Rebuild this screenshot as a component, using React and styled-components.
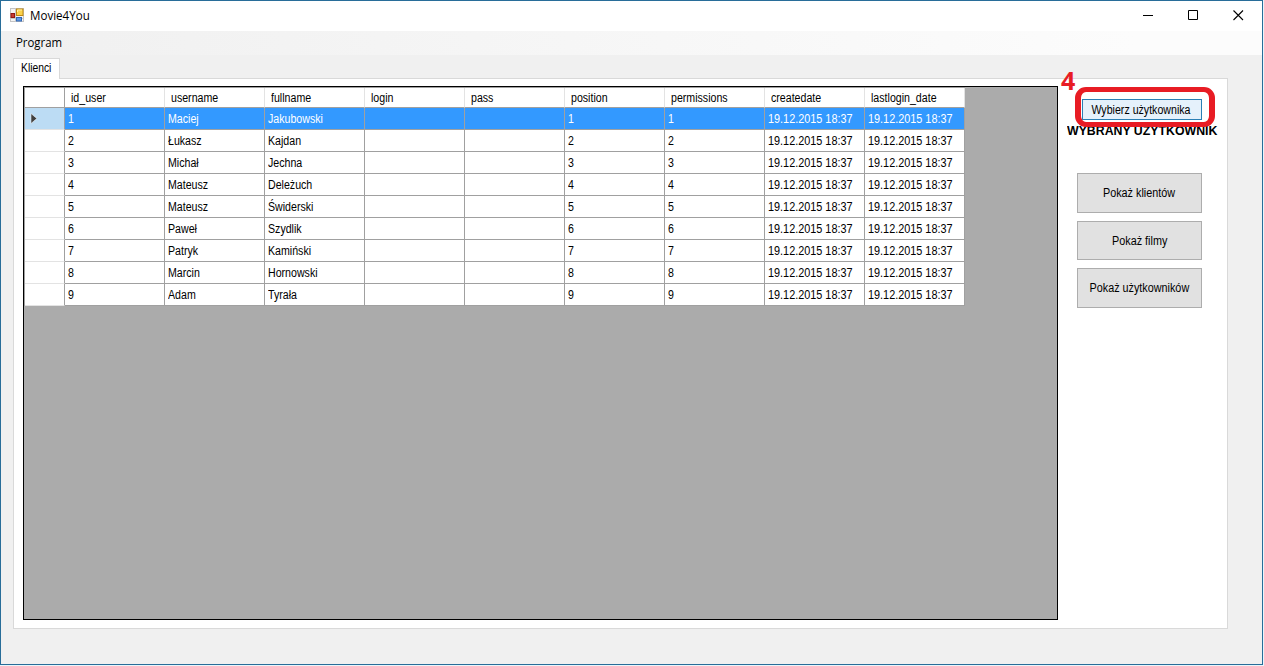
import React from "react";
import styled, { createGlobalStyle } from "styled-components";

const Global = createGlobalStyle`
  * { box-sizing: border-box; }
  html, body { margin: 0; padding: 0; background: #e9f5fb; overflow: hidden; }
  body { font-family: "Liberation Sans", Arial, sans-serif; font-size: 12px; color: #000; }
`;

const Window = styled.div`
  display: flex;
  flex-direction: column;
  width: 1263px;
  height: 665px;
  border: 1px solid #286d99;
  background: #f0f0f0;
`;

const TitleBar = styled.header`
  display: flex;
  align-items: center;
  flex: none;
  height: 30px;
  padding: 0 1px 2px 9px;
  background: #fff;
`;

const Label = styled.span`
  display: inline-block;
  white-space: pre;
  transform-origin: ${(p) => p.$origin || "left"} center;
  transform: scaleX(${(p) => p.$scale || 0.9});
`;

const SystemText = styled(Label)`
  font-family: "Open Sans", "Noto Sans", sans-serif;
  font-size: 12px;
  line-height: 16px;
`;

const Title = styled(SystemText)`
  flex: 1;
  margin: 2px 0 0 6px;
`;

const WindowButtons = styled.div`
  display: flex;
  flex: none;
`;

const WindowButton = styled.div`
  display: flex;
  align-items: center;
  justify-content: center;
  width: 45px;
  height: 28px;
`;

const MenuBar = styled.nav`
  flex: none;
  height: 24px;
  padding: 4px 15px;
  background: linear-gradient(90deg, #f0f0f0, #fcfcfc 90%);
`;

const TabControl = styled.main`
  display: flex;
  flex-direction: column;
  flex: 1;
  padding: 3px 34px 35px 12px;
`;

const Tab = styled.div`
  z-index: 1;
  width: 47px;
  height: 21px;
  margin-bottom: -1px;
  padding: 2px 0 0 7px;
  line-height: 14px;
  border: 1px solid #d9d9d9;
  border-bottom: 0;
  background: #fff;
`;

const TabPage = styled.section`
  display: flex;
  flex: 1;
  padding: 7px 9px 8px;
  border: 1px solid #d9d9d9;
  background: #fff;
`;

const GridBox = styled.div`
  flex: none;
  width: 1035px;
  border: 1px solid #000;
  background: #ababab;
`;

const Grid = styled.div`
  width: 941px;
  border-top: 1px solid #a0a0a0;
  border-left: 1px solid #a0a0a0;
`;

const Row = styled.div`
  display: grid;
  grid-template-columns: 40px repeat(9, 100px);
  height: ${(p) => (p.$head ? 20 : 22)}px;
`;

const HeadCell = styled.div`
  padding: 3px 0 0 6px;
  line-height: 14px;
  background: #fff;
  border-right: 1px solid ${(p) => (p.$corner ? "#a0a0a0" : "#e3e3e3")};
  border-bottom: 1px solid #a0a0a0;
`;

const RowHead = styled.div`
  display: flex;
  align-items: center;
  padding-left: 5px;
  background: ${(p) => (p.$selected ? "#bcdcf4" : "#fff")};
  border-right: 1px solid #a0a0a0;
  border-bottom: 1px solid #e3e3e3;
`;

const Cell = styled.div`
  padding: 4px 0 0 3px;
  line-height: 14px;
  color: ${(p) => (p.$selected ? "#fff" : "#000")};
  background: ${(p) => (p.$selected ? "#3399ff" : "#fff")};
  border-right: 1px solid #a0a0a0;
  border-bottom: 1px solid #a0a0a0;
`;

const Side = styled.aside`
  display: flex;
  flex-direction: column;
  width: 160px;
  padding-left: 9px;
`;

const PickArea = styled.div`
  position: relative;
  height: 87px;
  padding: 13px 0 0 15px;
`;

const Button = styled.button`
  display: flex;
  align-items: center;
  justify-content: center;
  width: 125px;
  height: ${(p) => p.$height || 40}px;
  padding: 0;
  font: inherit;
  color: #000;
  line-height: 14px;
  border: 1px solid #adadad;
  background: #e1e1e1;
`;

const PickButton = styled(Button)`
  width: 120px;
  height: 21px;
  padding-right: 2px;
  border-color: #2a7fb5;
  background: #e5f1fb;
`;

const Status = styled.div`
  margin: 4px 0 0 -15px;
  font-size: 12px;
  font-weight: bold;
  line-height: 14px;
`;

const Ring = styled.div`
  position: absolute;
  left: 8px;
  top: 1px;
  width: 140px;
  height: 40px;
  border: 5px solid #e81c24;
  border-left-width: 6px;
  border-right-width: 6px;
  border-radius: 11px;
`;

const StepNumber = styled.div`
  position: absolute;
  left: -6px;
  top: -22px;
  font: bold 25px/32px "Open Sans", "Noto Sans", sans-serif;
  color: #e81c24;
`;

const Actions = styled.div`
  display: flex;
  flex-direction: column;
  gap: 8px;
  padding-left: 10px;
`;

const columns = ["id_user", "username", "fullname", "login", "pass", "position", "permissions", "createdate", "lastlogin_date"];
const people = [
  ["Maciej", "Jakubowski"],
  ["Łukasz", "Kajdan"],
  ["Michał", "Jechna"],
  ["Mateusz", "Deleżuch"],
  ["Mateusz", "Świderski"],
  ["Paweł", "Szydlik"],
  ["Patryk", "Kamiński"],
  ["Marcin", "Hornowski"],
  ["Adam", "Tyrała"],
];
const stamp = "19.12.2015 18:37";

function AppIcon() {
  return (
    <svg width="14" height="14" viewBox="0 0 14 14">
      <rect x=".5" y=".5" width="13" height="13" fill="#f4f4f4" stroke="#c4c4c4" />
      <path d="M0 10.5H14M5.5 0V14" stroke="#c8c8c8" />
      <rect x="1" y="5.5" width="3.5" height="4" fill="#c63a32" stroke="#8e1712" />
      <rect x="6.5" y="1" width="6.5" height="6.5" fill="#fbd24b" stroke="#c08a14" />
      <path d="M7.5 4V2H12" fill="none" stroke="#fff0a8" />
      <rect x="6.5" y="9.5" width="5" height="3.5" fill="#5e9be8" stroke="#3266b3" />
    </svg>
  );
}

function App() {
  return (
    <>
      <Global />
      <Window>
        <TitleBar>
          <AppIcon />
          <Title $scale={0.965}>Movie4You</Title>
          <WindowButtons>
            <WindowButton>
              <svg width="11" height="11"><path d="M0 5.5H10" stroke="#000" /></svg>
            </WindowButton>
            <WindowButton>
              <svg width="11" height="11"><path d="M.5 .5H9.5V9.5H.5Z" fill="none" stroke="#000" /></svg>
            </WindowButton>
            <WindowButton>
              <svg width="11" height="11"><path d="M.5 .5L10 10M10 .5L.5 10" stroke="#000" strokeWidth="1.1" /></svg>
            </WindowButton>
          </WindowButtons>
        </TitleBar>
        <MenuBar>
          <SystemText $scale={0.95}>Program</SystemText>
        </MenuBar>
        <TabControl>
          <Tab><Label $scale={0.86}>Klienci</Label></Tab>
          <TabPage>
            <GridBox>
              <Grid>
                <Row $head>
                  <HeadCell $corner />
                  {columns.map((c) => <HeadCell key={c}><Label $scale={0.885}>{c}</Label></HeadCell>)}
                </Row>
                {people.map(([first, last], i) => {
                  const n = String(i + 1);
                  const selected = i === 0;
                  return (
                    <Row key={n}>
                      <RowHead $selected={selected}>
                        {selected && (
                          <svg width="8" height="11"><path d="M1 .5L6.8 5.5L1 10.5Z" fill="#404040" stroke="#fff" strokeWidth=".5" /></svg>
                        )}
                      </RowHead>
                      {[n, first, last, "", "", n, n, stamp, stamp].map((v, j) => (
                        <Cell key={j} $selected={selected}>
                          <Label $scale={v === stamp ? 0.905 : 0.885}>{v}</Label>
                        </Cell>
                      ))}
                    </Row>
                  );
                })}
              </Grid>
            </GridBox>
            <Side>
              <PickArea>
                <PickButton><Label $origin="center" $scale={0.885}>Wybierz użytkownika</Label></PickButton>
                <Status><Label $scale={1.027}>WYBRANY UŻYTKOWNIK</Label></Status>
                <Ring />
                <StepNumber>4</StepNumber>
              </PickArea>
              <Actions>
                <Button><Label $origin="center">Pokaż klientów</Label></Button>
                <Button $height={39}><Label $origin="center">Pokaż filmy</Label></Button>
                <Button><Label $origin="center">Pokaż użytkowników</Label></Button>
              </Actions>
            </Side>
          </TabPage>
        </TabControl>
      </Window>
    </>
  );
}

export default App;
